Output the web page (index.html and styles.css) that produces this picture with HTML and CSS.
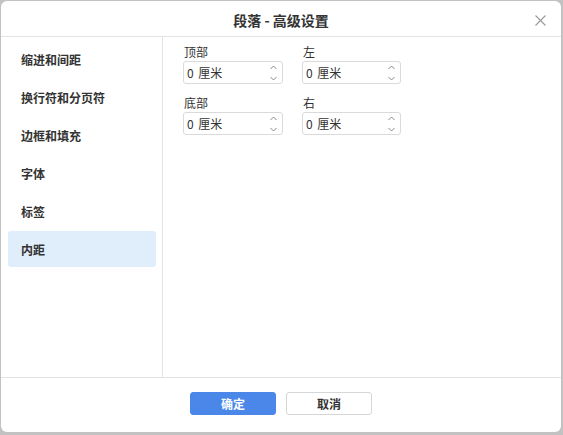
FILE: index.html
```html
<!DOCTYPE html>
<html lang="zh-CN">
<head>
<meta charset="utf-8">
<link rel="stylesheet" href="styles.css">
</head>
<body>
<div class="dialog">
  <div class="header">
    <div class="title">段落 - 高级设置</div>
    <svg class="close" width="11" height="11" viewBox="0 0 11 11"><path d="M0.5 0.5L10.5 10.5M10.5 0.5L0.5 10.5" stroke="#9a9a9a" stroke-width="1.1" fill="none"/></svg>
  </div>
  <div class="main">
    <div class="sidebar">
      <div class="item">缩进和间距</div>
      <div class="item">换行符和分页符</div>
      <div class="item">边框和填充</div>
      <div class="item">字体</div>
      <div class="item">标签</div>
      <div class="item active">内距</div>
    </div>
    <div class="content">
      <div class="grid">
        <div class="field">
          <div class="label">顶部</div>
          <div class="spin"><span class="val">0 厘米</span><span class="arrows"><svg width="7" height="16" viewBox="0 0 7 16"><path d="M0.5 4L3.5 1L6.5 4M0.5 12L3.5 15L6.5 12" stroke="#8a8a8a" stroke-width="1" fill="none"/></svg></span></div>
        </div>
        <div class="field">
          <div class="label">左</div>
          <div class="spin"><span class="val">0 厘米</span><span class="arrows"><svg width="7" height="16" viewBox="0 0 7 16"><path d="M0.5 4L3.5 1L6.5 4M0.5 12L3.5 15L6.5 12" stroke="#8a8a8a" stroke-width="1" fill="none"/></svg></span></div>
        </div>
        <div class="field">
          <div class="label">底部</div>
          <div class="spin"><span class="val">0 厘米</span><span class="arrows"><svg width="7" height="16" viewBox="0 0 7 16"><path d="M0.5 4L3.5 1L6.5 4M0.5 12L3.5 15L6.5 12" stroke="#8a8a8a" stroke-width="1" fill="none"/></svg></span></div>
        </div>
        <div class="field">
          <div class="label">右</div>
          <div class="spin"><span class="val">0 厘米</span><span class="arrows"><svg width="7" height="16" viewBox="0 0 7 16"><path d="M0.5 4L3.5 1L6.5 4M0.5 12L3.5 15L6.5 12" stroke="#8a8a8a" stroke-width="1" fill="none"/></svg></span></div>
        </div>
      </div>
    </div>
  </div>
  <div class="footer">
    <button class="btn primary">确定</button>
    <button class="btn">取消</button>
  </div>
</div>
</body>
</html>
```
FILE: styles.css
```css
html, body {
  margin: 0;
  padding: 0;
}
body {
  width: 563px;
  height: 435px;
  background: #c2c2c2;
  font-family: "Noto Sans CJK SC", "Noto Sans", sans-serif;
  color: #333;
  overflow: hidden;
}
.dialog {
  margin: 1px 0 0 1px;
  width: 560px;
  height: 431px;
  background: #fff;
  border-radius: 6px;
  display: flex;
  flex-direction: column;
  overflow: hidden;
}
.header {
  height: 35px;
  border-bottom: 1px solid #e3e3e3;
  display: flex;
  align-items: center;
  justify-content: center;
  position: relative;
  flex: none;
}
.title {
  font-size: 14px;
  font-weight: bold;
  color: #333;
  line-height: 16px;
  margin-top: 2px;
}
.close {
  position: absolute;
  right: 15px;
  top: 14px;
}
.main {
  flex: 1;
  display: flex;
  min-height: 0;
}
.sidebar {
  width: 162px;
  border-right: 1px solid #e3e3e3;
  padding: 4px 0 0 7px;
  box-sizing: border-box;
  flex: none;
}
.item {
  width: 148px;
  height: 36px;
  margin-bottom: 2px;
  padding-left: 13px;
  box-sizing: border-box;
  display: flex;
  align-items: center;
  font-size: 12px;
  font-weight: bold;
  color: #333;
  border-radius: 3px;
}
.item.active {
  background: #e0edfb;
}
.content {
  flex: 1;
  padding: 6px 0 0 20px;
}
.grid {
  display: grid;
  grid-template-columns: 100px 99px;
  column-gap: 19px;
  row-gap: 10px;
}
.label {
  font-size: 12px;
  line-height: 18px;
  height: 18px;
  padding-left: 1px;
  color: #333;
}
.spin {
  height: 23px;
  border: 1px solid #dadada;
  border-radius: 3px;
  box-sizing: border-box;
  display: flex;
  align-items: center;
  justify-content: space-between;
  padding: 0 5px 0 3px;
}
.val {
  font-size: 12px;
  color: #333;
  line-height: 14px;
  word-spacing: 2px;
}
.arrows {
  display: flex;
  align-items: center;
}
.footer {
  height: 55px;
  border-top: 1px solid #e3e3e3;
  display: flex;
  justify-content: center;
  align-items: flex-start;
  gap: 10px;
  padding-top: 14px;
  box-sizing: border-box;
  flex: none;
}
.btn {
  width: 86px;
  height: 23px;
  border: 1px solid #d6d6d6;
  border-radius: 3px;
  background: #fff;
  font-family: "Noto Sans CJK SC", "Noto Sans", sans-serif;
  font-size: 12px;
  font-weight: bold;
  color: #333;
  padding: 0;
}
.btn.primary {
  background: #4a87e8;
  border-color: #4a87e8;
  color: #fff;
}
```
